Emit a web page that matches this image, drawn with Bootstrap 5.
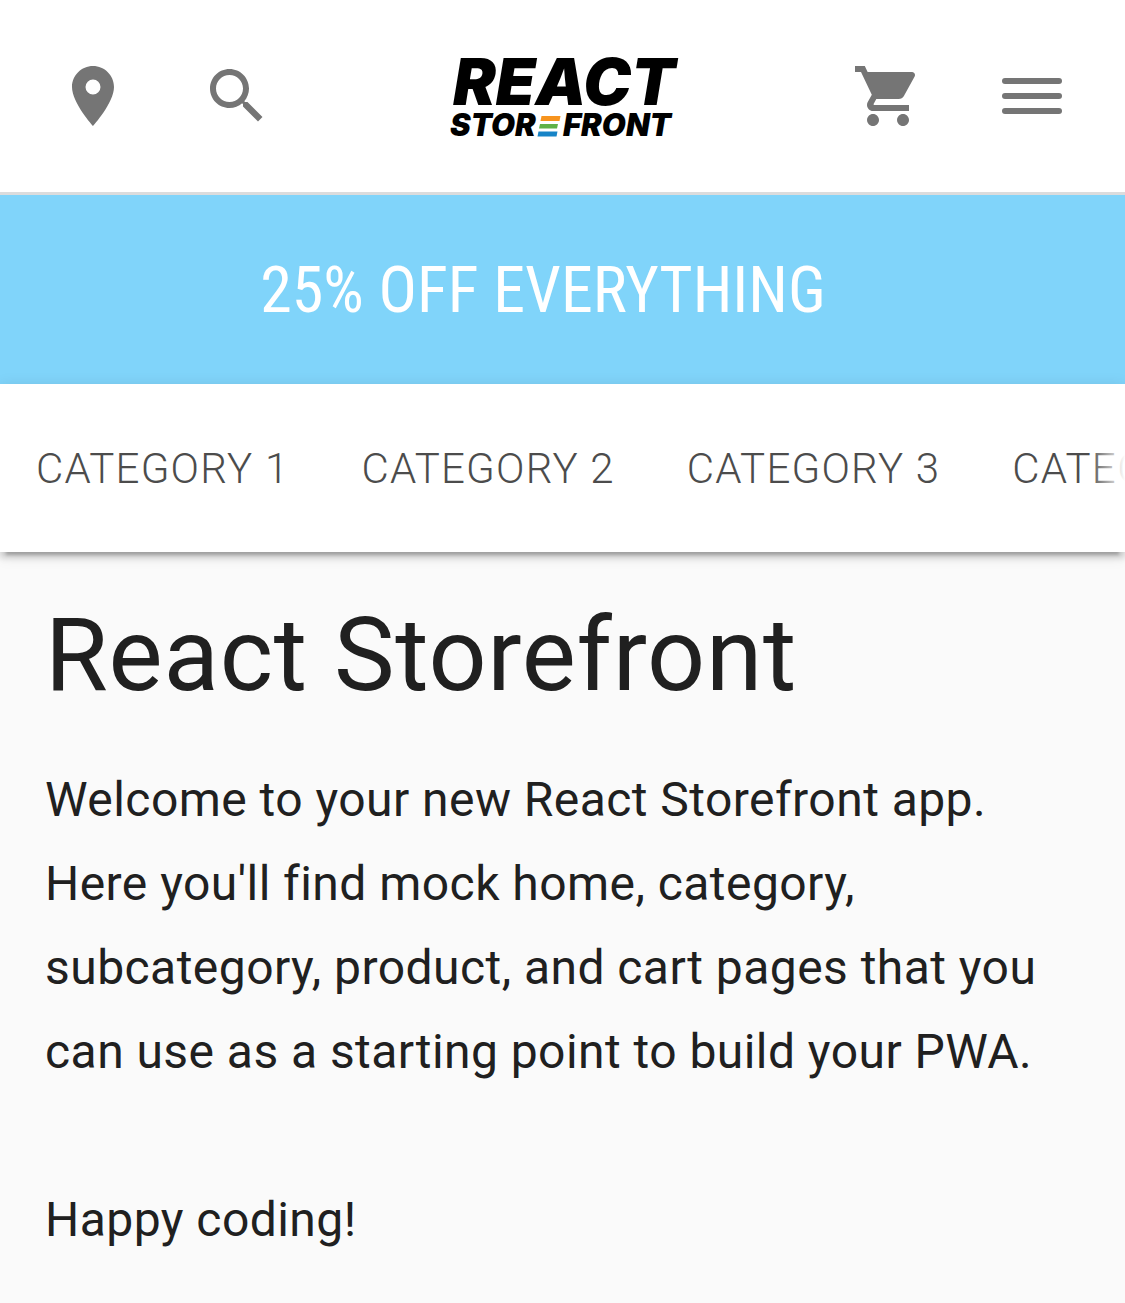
<!DOCTYPE html>
<html lang="en">
<head>
<meta charset="utf-8">
<meta name="viewport" content="width=device-width, initial-scale=1">
<title>React Storefront</title>
<link href="https://cdn.jsdelivr.net/npm/bootstrap@5.3.0/dist/css/bootstrap.min.css" rel="stylesheet">
<style>
  body { font-family: Roboto, "Noto Sans", sans-serif; background: #fafafa; color: #202020; }
  .site-header { height: 195px; padding: 0 21px; border-bottom: 3px solid #dbdcdd; }
  .icon-btn { width: 144px; height: 144px; border: 0; color: #757575; }
  .icon-btn svg { width: 72px; height: 72px; fill: currentColor; display: block; }
  .logo-link svg { width: 240px; height: 120px; display: block; overflow: visible; }
  .logo-link text { font-family: Inter, "Liberation Sans", sans-serif; font-weight: 900; font-style: italic; }
  .promo { height: 189px; background: #80d4fa; color: #fff; font-family: "Roboto Condensed", Roboto, sans-serif; font-size: 64px; line-height: 72px; padding: 2px 39px 0 0; }
  .category-bar { height: 168px; box-shadow: 0 9px 3px -6px rgba(0,0,0,.2), 0 6px 6px 0 rgba(0,0,0,.14), 0 3px 15px 0 rgba(0,0,0,.12); }
  .category-bar .nav { padding-top: 2px; }
  .category-bar .nav-link { color: #202020; opacity: .8; padding: 0 36px; font-size: 42px; font-weight: 300; line-height: 72px; letter-spacing: .02857em; white-space: nowrap; }
  .edge-fade { width: 36px; background: linear-gradient(to right, rgba(255,255,255,0), #fff); }
  .intro { padding: 43px 45px; }
  .intro h1 { font-size: 102px; line-height: 120px; font-weight: 400; letter-spacing: .00735em; margin-bottom: 43px; }
  .intro p { font-size: 48px; line-height: 84px; letter-spacing: .00938em; margin-bottom: 84px; }
</style>
</head>
<body>
<header class="site-header bg-white d-flex align-items-center justify-content-between">
  <div class="d-flex">
    <button type="button" class="icon-btn btn p-0 d-flex align-items-center justify-content-center" aria-label="Find a store">
      <svg viewBox="0 0 24 24"><path d="M12 2C8.13 2 5 5.13 5 9c0 5.25 7 13 7 13s7-7.75 7-13c0-3.87-3.130-7-7-7zm0 9.5a2.500 2.500 0 0 1 0-5 2.500 2.500 0 0 1 0 5z"/></svg>
    </button>
    <button type="button" class="icon-btn btn p-0 d-flex align-items-center justify-content-center" aria-label="Search">
      <svg viewBox="0 0 24 24"><path d="M15.500 14h-.79l-.28-.27C15.410 12.590 16 11.110 16 9.500 16 5.910 13.090 3 9.500 3S3 5.910 3 9.500 5.910 16 9.500 16c1.610 0 3.090-.59 4.230-1.570l.27.28v.79l5 4.990L20.490 19l-4.990-5zm-6 0C7.010 14 5 11.990 5 9.500S7.010 5 9.500 5 14 7.010 14 9.500 11.990 14 9.500 14z"/></svg>
    </button>
  </div>
  <a href="#" class="logo-link text-black" aria-label="React Storefront home">
    <svg viewBox="0 0 240 120">
      <text x="10" y="69" font-size="64">REACT</text>
      <text x="7" y="100" font-size="31">STOR</text>
      <path fill="#f7941e" d="M98.500 80h19l-1 5h-19z"/>
      <path fill="#5fb146" d="M97 88h18l-1 4.500H96z"/>
      <path fill="#1784c7" d="M95.500 95.500h19l-1 5h-19z"/>
      <text x="120" y="100" font-size="31">FRONT</text>
    </svg>
  </a>
  <div class="d-flex">
    <button type="button" class="icon-btn btn p-0 d-flex align-items-center justify-content-center" aria-label="Cart">
      <svg viewBox="0 0 24 24"><path d="M7 18c-1.100 0-1.990.9-1.990 2S5.900 22 7 22s2-.9 2-2-.9-2-2-2zM1 2v2h2l3.600 7.590-1.350 2.450c-.16.28-.25.61-.25.960 0 1.100.9 2 2 2h12v-2H7.420c-.14 0-.25-.11-.25-.25l.03-.12.9-1.630h7.450c.75 0 1.410-.41 1.750-1.030l3.580-6.490c.08-.14.12-.31.12-.48 0-.55-.45-1-1-1H5.210l-.94-2H1zm16 16c-1.100 0-1.990.9-1.990 2s.89 2 1.990 2 2-.9 2-2-.9-2-2-2z"/></svg>
    </button>
    <button type="button" class="icon-btn btn p-0 d-flex align-items-center justify-content-center" aria-label="Menu">
      <svg viewBox="0 0 24 24"><rect x="2" y="6" width="20" height="2" rx="1"/><rect x="2" y="11" width="20" height="2" rx="1"/><rect x="2" y="16" width="20" height="2" rx="1"/></svg>
    </button>
  </div>
</header>
<div class="promo d-flex align-items-center justify-content-center">25% OFF EVERYTHING</div>
<nav class="category-bar bg-white position-relative" aria-label="Categories">
  <div class="nav flex-nowrap align-items-center overflow-hidden h-100">
    <a class="nav-link" href="#">CATEGORY 1</a>
    <a class="nav-link" href="#">CATEGORY 2</a>
    <a class="nav-link" href="#">CATEGORY 3</a>
    <a class="nav-link" href="#">CATEGORY 4</a>
  </div>
  <div class="edge-fade position-absolute top-0 end-0 h-100"></div>
</nav>
<main class="intro">
  <h1>React Storefront</h1>
  <p>Welcome to your new React Storefront app. Here you'll find mock home, category, subcategory, product, and cart pages that you can use as a starting point to build your PWA.</p>
  <p class="mb-0">Happy coding!</p>
</main>
<script src="https://cdn.jsdelivr.net/npm/bootstrap@5.3.0/dist/js/bootstrap.bundle.min.js"></script>
</body>
</html>
